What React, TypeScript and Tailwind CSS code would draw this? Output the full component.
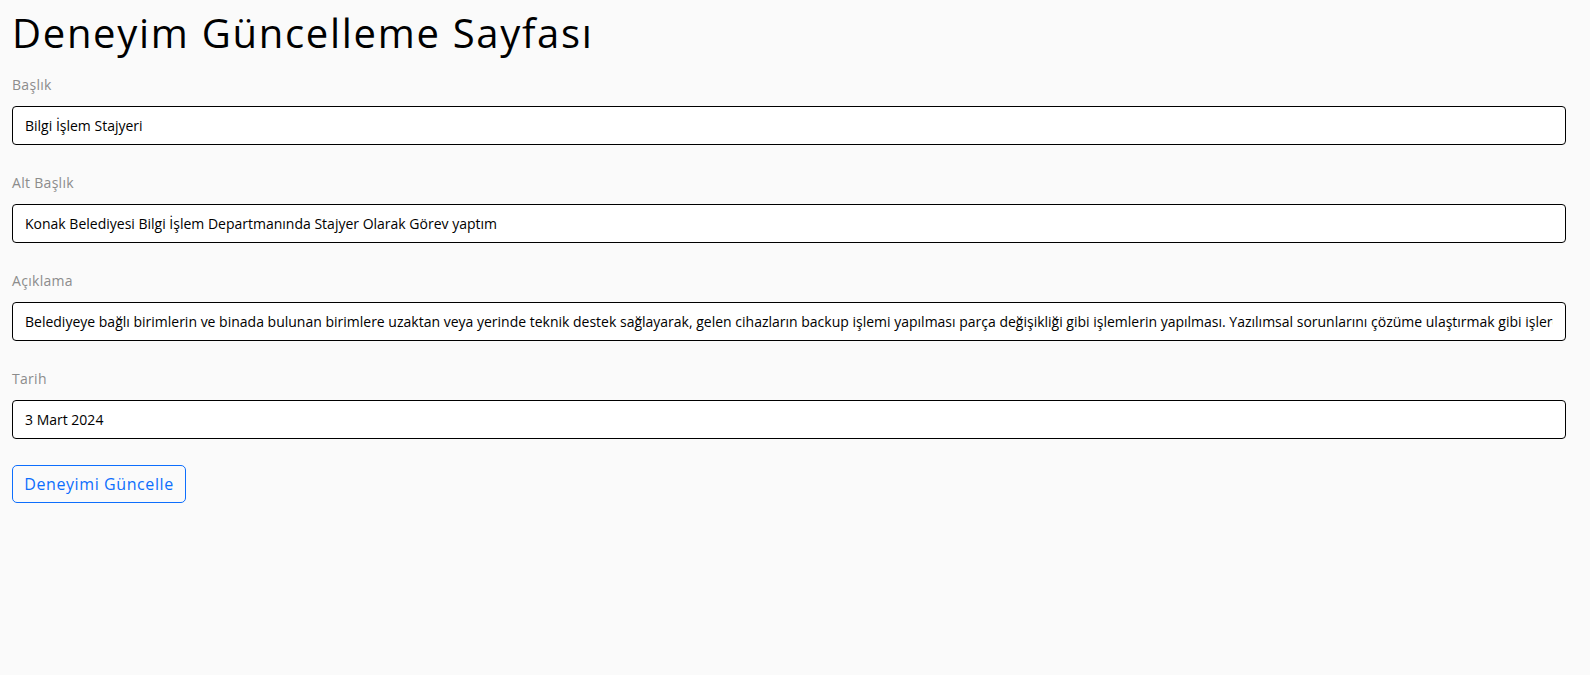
import React from 'react';

const fields = [
    { label: 'Başlık', value: 'Bilgi İşlem Stajyeri' },
    { label: 'Alt Başlık', value: 'Konak Belediyesi Bilgi İşlem Departmanında Stajyer Olarak Görev yaptım' },
    {
        label: 'Açıklama',
        value: 'Belediyeye bağlı birimlerin ve binada bulunan birimlere uzaktan veya yerinde teknik destek sağlayarak, gelen cihazların backup işlemi yapılması parça değişikliği gibi işlemlerin yapılması. Yazılımsal sorunlarını çözüme ulaştırmak gibi işlerde görev aldım.',
    },
    { label: 'Tarih', value: '3 Mart 2024' },
];

export default function App() {
    return (
        <div className="min-h-[675px] bg-[#fafafa] pl-3 pr-6 pt-[9px] font-['Open_Sans',sans-serif] text-black">
            {/* Page title */}
            <h1 className="text-[40px] leading-[48px] font-normal tracking-[1.7px]">Deneyim Güncelleme Sayfası</h1>

            <form className="mt-[17px]" onSubmit={(e) => e.preventDefault()}>
                {fields.map((f) => (
                    <div key={f.label} className="mb-[27px]">
                        <label className="block text-[14px] leading-[21px] text-[#8c8c8c] mb-[11px] tracking-[0.3px]">{f.label}</label>
                        <input
                            defaultValue={f.value}
                            className="block w-full h-[39px] px-3 bg-white border border-black rounded-[4px] text-[14px] text-black outline-none"
                        />
                    </div>
                ))}

                {/* Submit */}
                <button
                    type="submit"
                    className="block -mt-[1px] h-[38px] w-[174px] border border-[#0d6efd] rounded-[5px] text-[16px] tracking-[0.6px] text-[#0d6efd] bg-transparent"
                >
                    Deneyimi Güncelle
                </button>
            </form>
        </div>
    );
}
